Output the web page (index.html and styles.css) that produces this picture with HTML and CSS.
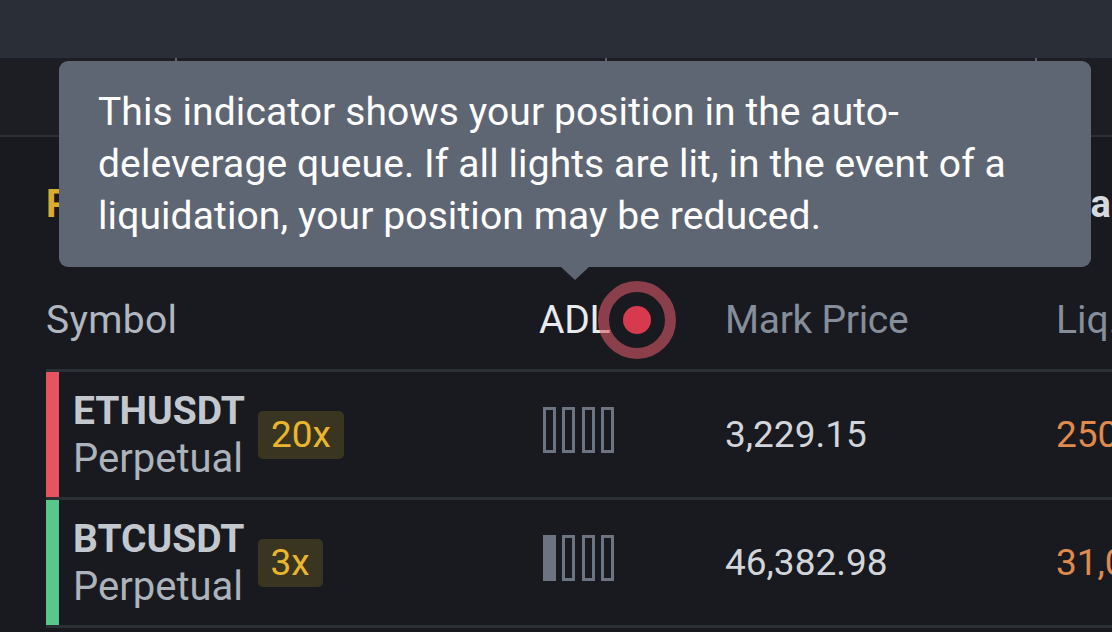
FILE: index.html
```html
<!DOCTYPE html>
<html lang="en">
<head>
<meta charset="utf-8">
<title>Positions</title>
<link rel="stylesheet" href="styles.css">
</head>
<body>
<div class="topbar"></div>
<div class="tabband">
  <div class="seg"></div>
  <div class="seg sep"></div>
  <div class="seg sep"></div>
  <div class="seg sep"></div>
</div>
<main class="panel">
  <div class="title-row">
    <span class="title">Positions(2)</span>
    <span class="other-tab">Trade History</span>
  </div>
  <div class="table">
    <div class="trow head">
      <div class="cell c-sym">Symbol</div>
      <div class="cell c-adl"><span class="adl-label">ADL</span><span class="dot"></span></div>
      <div class="cell c-mark">Mark Price</div>
      <div class="cell c-liq">Liq. Price</div>
    </div>
    <div class="trow">
      <div class="cell c-sym side-short">
        <div class="sym-name"><span class="pair">ETHUSDT</span><span class="kind">Perpetual</span></div>
        <span class="lev">20x</span>
      </div>
      <div class="cell c-adl"><div class="bars"><i></i><i></i><i></i><i></i></div></div>
      <div class="cell c-mark num">3,229.15</div>
      <div class="cell c-liq liq">250.91</div>
    </div>
    <div class="trow">
      <div class="cell c-sym side-long">
        <div class="sym-name"><span class="pair">BTCUSDT</span><span class="kind">Perpetual</span></div>
        <span class="lev">3x</span>
      </div>
      <div class="cell c-adl"><div class="bars"><i class="on"></i><i></i><i></i><i></i></div></div>
      <div class="cell c-mark num">46,382.98</div>
      <div class="cell c-liq liq">31,014.22</div>
    </div>
  </div>
</main>
<div class="tooltip">This indicator shows your position in the auto-<br>deleverage queue. If all lights are lit, in the event of a<br>liquidation, your position may be reduced.</div>
</body>
</html>
```
FILE: styles.css
```css
*, *::before, *::after { box-sizing: border-box; }
html, body { margin: 0; padding: 0; }
body {
  width: 1112px;
  height: 632px;
  overflow: hidden;
  background: #181a20;
  font-family: Roboto, "Liberation Sans", sans-serif;
  position: relative;
}
.topbar {
  height: 58px;
  background: #2a2f37;
}
.tabband {
  height: 79px;
  background: #1c1e23;
  border-bottom: 2px solid #2b2f36;
  display: grid;
  grid-template-columns: 175px 430px 430px 1fr;
}
.seg.sep {
  border-left: 2px solid #5b626e;
  height: 20px;
}
.panel {
  padding-left: 46px;
}
.title-row {
  height: 134px;
  display: grid;
  grid-template-columns: 1009px auto;
  align-items: center;
  white-space: nowrap;
  font-size: 38px;
  font-weight: 700;
}
.title { color: #dcaa2f; }
.other-tab { color: #d5d9de; }
.trow {
  display: grid;
  grid-template-columns: 493px 186px 331px 1fr;
  height: 128px;
  border-bottom: 3px solid #2b2f36;
  align-items: center;
  white-space: nowrap;
}
.trow.head {
  height: 101px;
  font-size: 39px;
  padding-bottom: 1px;
}
.head .c-sym { color: #b1b7bf; letter-spacing: 0.3px; }
.head .c-adl { color: #e8eaed; position: relative; display: flex; align-items: center; }
.adl-label { letter-spacing: -0.3px; }
.head .c-mark { color: #858e9b; letter-spacing: -0.3px; }
.head .c-liq { color: #858e9b; }
.dot {
  position: relative;
  display: inline-block;
  width: 28px;
  height: 28px;
  border-radius: 50%;
  background: #d7394f;
  margin-left: 13px;
}
.dot::after {
  content: "";
  position: absolute;
  left: -25px;
  top: -25px;
  width: 78px;
  height: 78px;
  border-radius: 50%;
  border: 11px solid rgba(217, 88, 104, 0.6);
}
.c-sym {
  display: flex;
  align-items: center;
  gap: 13px;
  height: 100%;
}
.side-short { border-left: 13px solid #e5545f; padding-left: 14px; }
.side-long { border-left: 13px solid #58c78a; padding-left: 14px; }
.sym-name {
  display: flex;
  flex-direction: column;
  line-height: 48px;
}
.pair { font-size: 39px; font-weight: 700; color: #c3c8ce; }
.kind { font-size: 40px; color: #adb3ba; }
.lev {
  background: #3a3521;
  color: #e9b62e;
  font-size: 37px;
  line-height: 48px;
  padding: 0 13px;
  border-radius: 5px;
}
.bars {
  display: flex;
  gap: 6.4px;
  margin-left: 4px;
  margin-bottom: 10px;
}
.bars i {
  display: block;
  width: 13px;
  height: 46px;
  border: 3px solid #6c7482;
}
.bars i.on { background: #6c7482; }
.num { font-size: 37px; color: #d2d6db; }
.liq { font-size: 37px; color: #e08a4c; }
.tooltip {
  position: absolute;
  left: 59px;
  top: 61px;
  width: 1032px;
  height: 206px;
  padding: 25px 0 0 39px;
  background: #5f6673;
  border-radius: 9px;
  color: #ffffff;
  font-size: 39px;
  letter-spacing: 0.1px;
  line-height: 52px;
  white-space: nowrap;
}
.tooltip::after {
  content: "";
  position: absolute;
  left: 502px;
  top: 206px;
  border-left: 14px solid transparent;
  border-right: 14px solid transparent;
  border-top: 13px solid #5f6673;
}
```
